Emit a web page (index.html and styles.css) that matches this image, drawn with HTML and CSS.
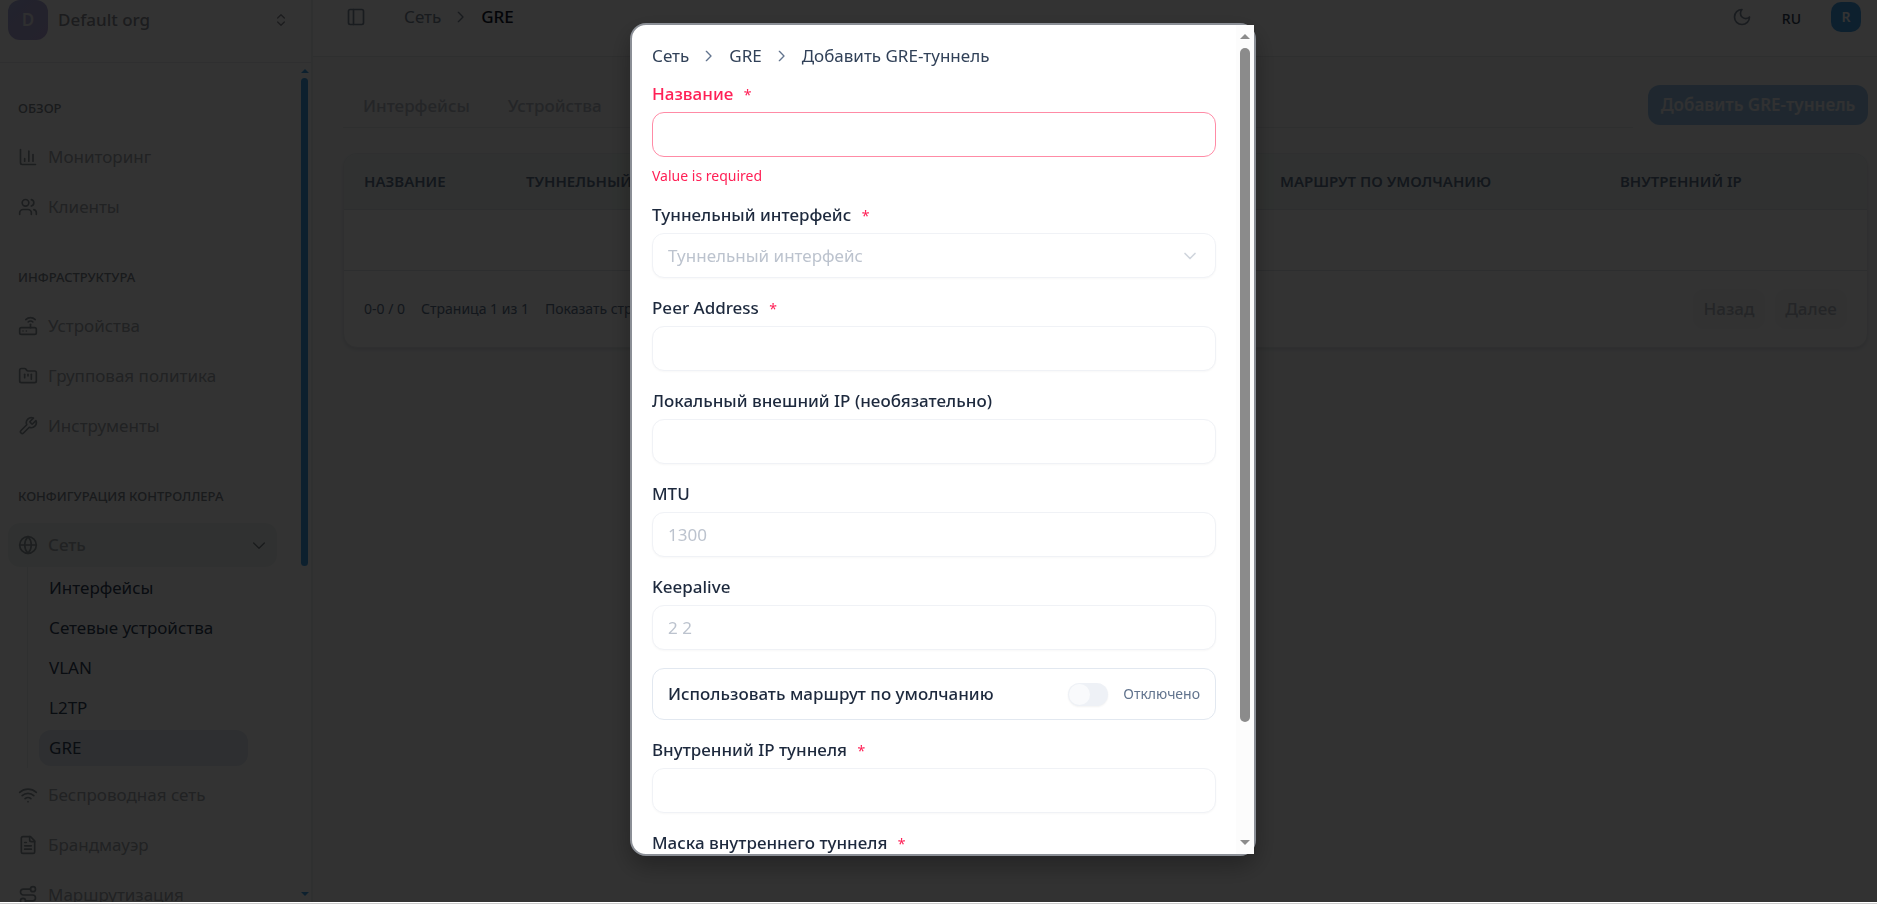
FILE: index.html
```
<!DOCTYPE html>
<html lang="ru">

<head>
  <meta charset="UTF-8">
  <meta name="viewport" content="width=device-width, initial-scale=1.0">
  <title>GRE</title>
  <link rel="stylesheet" href="styles.css">
</head>

<body>
  <div class="app">
    <aside class="sidebar">
      <button class="org" type="button">
        <span class="org-logo">D</span>
        <span class="org-name">Default org</span>
        <svg class="icon-sm" viewBox="0 0 24 24"><path d="m7 15 5 5 5-5"/><path d="m7 9 5-5 5 5"/></svg>
      </button>

      <div class="sidebar-body">
        <nav class="nav">
          <h3 class="nav-title">ОБЗОР</h3>
          <a class="nav-item" href="#">
            <svg class="icon" viewBox="0 0 24 24"><path d="M3 3v16a2 2 0 0 0 2 2h16"/><path d="M18 17V9"/><path d="M13 17V5"/><path d="M8 17v-3"/></svg>
            <span>Мониторинг</span>
          </a>
          <a class="nav-item" href="#">
            <svg class="icon" viewBox="0 0 24 24"><path d="M16 21v-2a4 4 0 0 0-4-4H6a4 4 0 0 0-4 4v2"/><circle cx="9" cy="7" r="4"/><path d="M22 21v-2a4 4 0 0 0-3-3.87"/><path d="M16 3.13a4 4 0 0 1 0 7.75"/></svg>
            <span>Клиенты</span>
          </a>

          <h3 class="nav-title">ИНФРАСТРУКТУРА</h3>
          <a class="nav-item" href="#">
            <svg class="icon" viewBox="0 0 24 24"><rect width="20" height="8" x="2" y="14" rx="2"/><path d="M6.01 18H6"/><path d="M10.01 18H10"/><path d="M15 10v4"/><path d="M17.84 7.17a4 4 0 0 0-5.66 0"/><path d="M20.66 4.34a8 8 0 0 0-11.31 0"/></svg>
            <span>Устройства</span>
          </a>
          <a class="nav-item" href="#">
            <svg class="icon" viewBox="0 0 24 24"><path d="M4 20h16a2 2 0 0 0 2-2V8a2 2 0 0 0-2-2h-7.93a2 2 0 0 1-1.66-.9l-.82-1.2A2 2 0 0 0 7.93 3H4a2 2 0 0 0-2 2v13c0 1.1.9 2 2 2Z"/><path d="M8 10v4"/><path d="M12 10v2"/><path d="M16 10v6"/></svg>
            <span>Групповая политика</span>
          </a>
          <a class="nav-item" href="#">
            <svg class="icon" viewBox="0 0 24 24"><path d="M14.7 6.3a1 1 0 0 0 0 1.4l1.6 1.6a1 1 0 0 0 1.4 0l3.77-3.77a6 6 0 0 1-7.94 7.94l-6.91 6.91a2.12 2.12 0 0 1-3-3l6.91-6.91a6 6 0 0 1 7.94-7.94l-3.76 3.76z"/></svg>
            <span>Инструменты</span>
          </a>

          <h3 class="nav-title">КОНФИГУРАЦИЯ КОНТРОЛЛЕРА</h3>
          <a class="nav-item open" href="#">
            <svg class="icon" viewBox="0 0 24 24"><circle cx="12" cy="12" r="10"/><path d="M12 2a14.5 14.5 0 0 0 0 20 14.5 14.5 0 0 0 0-20"/><path d="M2 12h20"/></svg>
            <span>Сеть</span>
            <svg class="icon-sm nav-arrow" viewBox="0 0 24 24"><path d="m4 9 8 8 8-8"/></svg>
          </a>
          <div class="subnav">
            <a class="subnav-item" href="#">Интерфейсы</a>
            <a class="subnav-item" href="#">Сетевые устройства</a>
            <a class="subnav-item" href="#">VLAN</a>
            <a class="subnav-item" href="#">L2TP</a>
            <a class="subnav-item active" href="#">GRE</a>
          </div>
          <a class="nav-item" href="#">
            <svg class="icon" viewBox="0 0 24 24"><path d="M12 20h.01"/><path d="M2 8.82a15 15 0 0 1 20 0"/><path d="M5 12.86a10 10 0 0 1 14 0"/><path d="M8.5 16.43a5 5 0 0 1 7 0"/></svg>
            <span>Беспроводная сеть</span>
          </a>
          <a class="nav-item" href="#">
            <svg class="icon" viewBox="0 0 24 24"><path d="M15 2H6a2 2 0 0 0-2 2v16a2 2 0 0 0 2 2h12a2 2 0 0 0 2-2V7Z"/><path d="M14 2v4a2 2 0 0 0 2 2h4"/><path d="M10 9H8"/><path d="M16 13H8"/><path d="M16 17H8"/></svg>
            <span>Брандмауэр</span>
          </a>
          <a class="nav-item" href="#">
            <svg class="icon" viewBox="0 0 24 24"><circle cx="6" cy="19" r="3"/><path d="M9 19h8.5a3.5 3.5 0 0 0 0-7h-11a3.5 3.5 0 0 1 0-7H15"/><circle cx="18" cy="5" r="3"/></svg>
            <span>Маршрутизация</span>
          </a>
        </nav>
        <div class="nav-scroll">
          <i class="arrow-up"></i>
          <i class="thumb"></i>
          <i class="arrow-down"></i>
        </div>
      </div>
    </aside>

    <div class="main">
      <header class="header">
        <button class="icon-btn" type="button" aria-label="Меню">
          <svg class="icon" viewBox="0 0 24 24"><rect width="18" height="18" x="3" y="3" rx="2"/><path d="M9 3v18"/></svg>
        </button>
        <nav class="crumbs">
          <a href="#">Сеть</a>
          <svg class="icon-sm" viewBox="0 0 24 24"><path d="m8 19 7-7-7-7"/></svg>
          <b>GRE</b>
        </nav>
        <div class="header-right">
          <button class="icon-btn" type="button" aria-label="Тема">
            <svg class="icon" viewBox="0 0 24 24"><path d="M12 3a6 6 0 0 0 9 9 9 9 0 1 1-9-9Z"/></svg>
          </button>
          <button class="lang" type="button">RU</button>
          <span class="avatar">R</span>
        </div>
      </header>

      <main class="content">
        <div class="toolbar">
          <div class="tabs">
            <a href="#">Интерфейсы</a>
            <a href="#">Устройства</a>
          </div>
          <button class="btn-add" type="button">Добавить GRE-туннель</button>
        </div>

        <div class="card">
          <table class="table">
            <thead>
              <tr>
                <th class="col-name">НАЗВАНИЕ</th>
                <th class="col-tunnel">ТУННЕЛЬНЫЙ</th>
                <th class="col-route">МАРШРУТ ПО УМОЛЧАНИЮ</th>
                <th>ВНУТРЕННИЙ IP</th>
              </tr>
            </thead>
            <tbody>
              <tr>
                <td colspan="4"></td>
              </tr>
            </tbody>
          </table>
          <div class="pager">
            <span>0-0 / 0</span>
            <span>Страница 1 из 1</span>
            <span>Показать строк</span>
            <div class="pager-buttons">
              <button type="button">Назад</button>
              <button type="button">Далее</button>
            </div>
          </div>
        </div>
      </main>
    </div>
  </div>

  <div class="overlay">
    <div class="modal" role="dialog" aria-label="Добавить GRE-туннель">
      <form class="form">
        <nav class="crumbs">
          <a href="#">Сеть</a>
          <svg class="icon-sm" viewBox="0 0 24 24"><path d="m8 19 7-7-7-7"/></svg>
          <a href="#">GRE</a>
          <svg class="icon-sm" viewBox="0 0 24 24"><path d="m8 19 7-7-7-7"/></svg>
          <span>Добавить GRE-туннель</span>
        </nav>

        <div class="field invalid">
          <label for="name">Название <em>*</em></label>
          <input id="name" type="text">
          <p class="error">Value is required</p>
        </div>

        <div class="field">
          <label for="iface">Туннельный интерфейс <em>*</em></label>
          <div class="select">
            <select id="iface">
              <option>Туннельный интерфейс</option>
            </select>
            <svg class="select-arrow" viewBox="0 0 24 24"><path d="m6 9 6 6 6-6"/></svg>
          </div>
        </div>

        <div class="field">
          <label for="peer">Peer Address <em>*</em></label>
          <input id="peer" type="text">
        </div>

        <div class="field">
          <label for="local">Локальный внешний IP (необязательно)</label>
          <input id="local" type="text">
        </div>

        <div class="field">
          <label for="mtu">MTU</label>
          <input id="mtu" type="text" placeholder="1300">
        </div>

        <div class="field">
          <label for="keepalive">Keepalive</label>
          <input id="keepalive" type="text" placeholder="2 2">
        </div>

        <div class="switch-row">
          <label for="route">Использовать маршрут по умолчанию</label>
          <input id="route" class="switch" type="checkbox">
          <span>Отключено</span>
        </div>

        <div class="field">
          <label for="ip">Внутренний IP туннеля <em>*</em></label>
          <input id="ip" type="text">
        </div>

        <div class="field">
          <label for="mask">Маска внутреннего туннеля <em>*</em></label>
          <input id="mask" type="text">
        </div>
      </form>
      <div class="modal-scroll">
        <i class="arrow-up"></i>
        <i class="thumb"></i>
        <i class="arrow-down"></i>
      </div>
    </div>
  </div>
</body>

</html>
```
FILE: styles.css
```
* {
  box-sizing: border-box;
}

html,
body {
  margin: 0;
  padding: 0;
}

body {
  height: 100vh;
  overflow: hidden;
  background: #fff;
  border-bottom: 1px solid #ccc;
  font-family: "Noto Sans", sans-serif;
  font-size: 17px;
  line-height: 24px;
  color: #1d293d;
}

a {
  color: inherit;
  text-decoration: none;
}

button,
input,
select {
  font: inherit;
  color: inherit;
}

button {
  padding: 0;
  border: none;
  background: none;
}

svg {
  flex: none;
  fill: none;
  stroke: currentColor;
  stroke-width: 2;
  stroke-linecap: round;
  stroke-linejoin: round;
}

.icon {
  width: 20px;
  height: 20px;
}

.icon-sm {
  width: 16px;
  height: 16px;
}

.app {
  display: flex;
  height: calc(100vh - 2px);
  overflow: hidden;
}

/* sidebar */
.sidebar {
  flex: none;
  display: flex;
  flex-direction: column;
  width: 313px;
  border-right: 2px solid #eceef1;
}

.org {
  flex: none;
  display: flex;
  align-items: center;
  gap: 10px;
  height: 63px;
  padding: 0 22px 22px 8px;
  border-bottom: 1px solid #eaecef;
  color: #8a8e94;
  text-align: left;
}

.org-logo {
  width: 40px;
  height: 40px;
  border-radius: 12px;
  background: linear-gradient(135deg, #a9aee0, #b4a6d8);
  color: #e8e8f0;
  font-weight: 600;
  line-height: 40px;
  text-align: center;
}

.org-name {
  flex: 1;
  font-weight: 500;
}

.sidebar-body {
  flex: 1;
  display: flex;
  min-height: 0;
}

.nav {
  flex: 1;
  padding: 33px 24px 0 8px;
  overflow: hidden;
  color: #a3a9ae;
}

.nav-title {
  margin: 0 0 15px;
  padding-left: 10px;
  font-size: 13px;
  font-weight: 500;
  color: #7d858e;
}

.nav-item + .nav-title {
  margin-top: 36px;
}

.nav-item {
  display: flex;
  align-items: center;
  gap: 10px;
  height: 44px;
  margin-bottom: 6px;
  padding: 0 10px;
  border-radius: 12px;
}

.nav-item.open {
  margin-bottom: 0;
  background: #f0f6f3;
  font-weight: 500;
}

.nav-item .icon {
  color: #8c949b;
}

.nav-item .nav-arrow {
  margin-left: auto;
  color: #7d858e;
}

.subnav {
  margin: 0 0 5px 19px;
  padding: 3px 29px 2px 11px;
  border-left: 1px solid #eceef1;
  color: #314158;
}

.subnav-item {
  display: block;
  margin-bottom: 4px;
  padding: 6px 10px;
  border-radius: 12px;
}

.subnav-item.active {
  margin-bottom: 0;
  background: #e4ebf3;
}

.nav-scroll {
  display: flex;
  flex-direction: column;
  width: 7px;
  margin-right: 3px;
  padding: 6px 0;
  color: #41a0e6;
}

.nav-scroll .thumb {
  height: 488px;
  margin: 5px 0 auto;
  border-radius: 4px;
  background: #41a0e6;
}

.arrow-up,
.arrow-down {
  border: solid transparent;
  border-width: 0 4px;
}

.arrow-up {
  border-bottom: 4px solid currentColor;
}

.arrow-down {
  border-top: 4px solid currentColor;
}

/* main area */
.main {
  flex: 1;
  min-width: 0;
  background: #f7f8fa;
}

.header {
  display: flex;
  align-items: center;
  height: 57px;
  padding: 0 16px 22px 33px;
  border-bottom: 1px solid #e6e8eb;
  background: #fcfcfd;
}

.icon-btn {
  display: flex;
  color: #7f8b9b;
}

.crumbs {
  display: flex;
  align-items: center;
  gap: 12px;
}

.header .crumbs {
  margin-left: 38px;
  color: #7a8694;
}

.crumbs b {
  font-weight: 500;
  color: #0f172b;
}

.header-right {
  display: flex;
  align-items: center;
  gap: 30px;
  margin-left: auto;
}

.lang {
  padding-top: 4px;
  font-size: 14px;
  font-weight: 500;
  color: #314158;
}

.avatar {
  width: 30px;
  height: 30px;
  border-radius: 10px;
  background: #41a0e6;
  color: #fff;
  font-size: 14px;
  font-weight: 600;
  line-height: 30px;
  text-align: center;
}

.content {
  padding: 28px 9px 0 30px;
}

.toolbar {
  display: flex;
  gap: 15px;
}

.tabs {
  flex: 1;
  display: flex;
  gap: 38px;
  height: 43px;
  padding: 9px 20px 0;
  border-bottom: 1px solid #e6e8eb;
  font-weight: 500;
  color: #b4bac2;
}

.btn-add {
  width: 220px;
  height: 40px;
  border-radius: 12px;
  background: #9cc4e8;
  color: #f2f5f8;
  font-weight: 600;
}

.card {
  margin-top: 25px;
  border: 1px solid #e9ecef;
  border-radius: 14px;
  background: #fcfcfd;
  box-shadow: 0 2px 3px rgba(0, 0, 0, .08);
  overflow: hidden;
}

.table {
  width: 100%;
  table-layout: fixed;
  border-collapse: collapse;
}

.table th {
  height: 55px;
  padding: 0 0 1px 20px;
  background: #f0f6f4;
  border-bottom: 1px solid #dfe3e8;
  color: #62748e;
  font-size: 15px;
  font-weight: 600;
  text-align: left;
  white-space: nowrap;
}

.table td {
  height: 61px;
  padding: 0;
  border-bottom: 1px solid #dfe3e8;
}

.col-name {
  width: 162px;
}

.col-tunnel {
  width: 754px;
}

.col-route {
  width: 340px;
}

.pager {
  display: flex;
  align-items: center;
  gap: 16px;
  height: 76px;
  padding: 0 20px;
  color: #62748e;
  font-size: 14px;
}

.pager-buttons {
  display: flex;
  gap: 10px;
  margin-left: auto;
}

.pager-buttons button {
  width: 72px;
  height: 40px;
  border-radius: 12px;
  background: #f8f9fa;
  color: #b4bac2;
  font-size: 17px;
  font-weight: 500;
}

/* modal */
.overlay {
  position: fixed;
  inset: 0 0 2px;
  display: flex;
  justify-content: center;
  padding: 23px 0 46px;
  background: rgba(0, 0, 0, .8);
}

.modal {
  display: flex;
  width: 626px;
  margin-left: 9px;
  border: 2px solid #8b8f96;
  border-radius: 16px;
  background: #fff;
  box-shadow: 0 10px 24px rgba(0, 0, 0, .3);
}

.form {
  flex: 1;
  display: flex;
  flex-direction: column;
  gap: 18px;
  padding: 19px 20px 0;
  border-radius: 14px 0 0 14px;
  overflow: hidden;
}

.form .crumbs {
  flex: none;
  margin-bottom: -4px;
  color: #314158;
}

.form .crumbs svg {
  color: #62748e;
}

.field label {
  display: block;
  margin-bottom: 6px;
  font-weight: 500;
}

.field em {
  margin-left: 6px;
  color: #ff2056;
  font-size: 14px;
  font-style: normal;
  font-weight: 400;
  line-height: 1;
}

.field input,
.field select {
  display: block;
  width: 100%;
  height: 45px;
  padding: 0 15px;
  border: 1px solid #f0f2f6;
  border-radius: 12px;
  outline: none;
  background: #fff;
  box-shadow: 0 1px 2px rgba(0, 0, 0, .03);
}

.field input::placeholder {
  color: #bcc3ce;
  opacity: 1;
}

.field.invalid label {
  color: #ff2056;
}

.field.invalid input {
  border-color: #ff8ba6;
  box-shadow: none;
}

.error {
  margin: 10px 0 0;
  color: #ff2056;
  font-size: 14px;
  line-height: 18px;
}

.select {
  position: relative;
}

.field .select select {
  appearance: none;
  color: #bcc3ce;
}

.select-arrow {
  position: absolute;
  top: 13px;
  right: 16px;
  width: 20px;
  height: 20px;
  color: #d0d5dd;
}

.switch-row {
  flex: none;
  display: flex;
  align-items: center;
  height: 52px;
  padding: 0 15px;
  border: 1px solid #e2e8f0;
  border-radius: 12px;
}

.switch-row label {
  margin-right: auto;
  font-weight: 500;
}

.switch-row span {
  color: #62748e;
  font-size: 14px;
}

.switch {
  appearance: none;
  display: flex;
  width: 40px;
  height: 23px;
  margin: 0 15px 0 0;
  padding: 1px;
  border-radius: 12px;
  background: #eef1f6;
  box-shadow: 0 1px 2px rgba(0, 0, 0, .05);
}

.switch::before {
  content: "";
  width: 21px;
  border-radius: 50%;
  background: #f9fafc;
}

.modal-scroll {
  display: flex;
  flex-direction: column;
  width: 18px;
  padding: 9px 4px;
  background: #fcfcfc;
  color: #8b8b8b;
}

.modal-scroll .thumb {
  height: 674px;
  margin: 9px 0 auto;
  border-radius: 5px;
  background: #8b8b8b;
}

.modal-scroll .arrow-up,
.modal-scroll .arrow-down {
  border-left-width: 5px;
  border-right-width: 5px;
}

.modal-scroll .arrow-up {
  border-bottom-width: 5px;
}

.modal-scroll .arrow-down {
  border-top-width: 5px;
}
```
